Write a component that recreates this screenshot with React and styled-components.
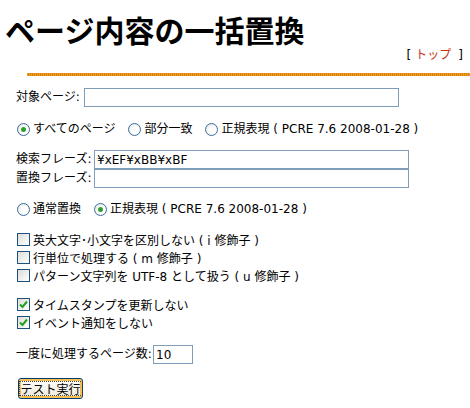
import styled, { createGlobalStyle } from 'styled-components';

const GlobalStyle = createGlobalStyle`
  html, body {
    margin: 0;
    padding: 0;
    background: #ffffff;
  }
  body {
    font-family: "DejaVu Sans", "Noto Sans CJK JP", sans-serif;
    font-size: 12px;
    color: #000000;
  }
`;

const Page = styled.div`
  width: 470px;
  height: 408px;
  overflow: hidden;
`;

const Title = styled.h1`
  margin: 0;
  padding: 13px 0 0 5px;
  height: 32px;
  line-height: 32px;
  font-family: "Noto Sans CJK JP", sans-serif;
  font-size: 30px;
  font-weight: 700;
  white-space: nowrap;
`;

const TopNav = styled.div`
  margin-top: 4px;
  height: 13px;
  line-height: 13px;
  text-align: right;
  padding-right: 7px;
  font-size: 12px;
  a {
    color: #c83412;
    text-decoration: none;
    margin: 0 7px 0 4px;
  }
`;

const Rule = styled.div`
  margin: 11px 0 0 27px;
  height: 3px;
  background: repeating-linear-gradient(90deg, #f0a020 0 1px, #d87c10 1px 2px);
`;

const Form = styled.form`
  padding-left: 16px;
`;

const FieldRow = styled.div`
  display: flex;
  align-items: center;
  height: 19px;
  margin-top: ${(p) => p.$top || 0}px;
`;

const Label = styled.label`
  width: ${(p) => p.$width}px;
  flex: none;
  white-space: nowrap;
  line-height: 19px;
`;

const TextInput = styled.input`
  box-sizing: border-box;
  width: ${(p) => p.$width}px;
  height: 19px;
  margin: 0;
  padding: 0 2px;
  border: 1px solid #7f9db9;
  font-family: "DejaVu Sans", "Noto Sans CJK JP", sans-serif;
  font-size: 12px;
  color: #000;
  background: #fff;
  outline: none;
`;

const OptionRow = styled.div`
  display: flex;
  align-items: center;
  height: 16px;
  margin-top: ${(p) => p.$top || 0}px;
  white-space: nowrap;
`;

const OptionItem = styled.label`
  display: flex;
  align-items: center;
  gap: 3px;
  margin-right: 12px;
  line-height: 16px;
`;

const Radio = styled.span`
  box-sizing: border-box;
  width: 13px;
  height: 13px;
  margin-left: 1px;
  border-radius: 50%;
  border: 1px solid #3c6c9c;
  background: radial-gradient(circle at 60% 60%, #ffffff 0 35%, #dcdcd4 100%);
  display: flex;
  align-items: center;
  justify-content: center;
  flex: none;
  &::after {
    content: '';
    width: 5px;
    height: 5px;
    border-radius: 50%;
    background: #2ca02c;
    display: ${(p) => (p.$checked ? 'block' : 'none')};
  }
`;

const CheckGroup = styled.div`
  margin-top: ${(p) => p.$top || 0}px;
`;

const CheckRow = styled.label`
  display: flex;
  align-items: center;
  gap: 3px;
  height: 18px;
  white-space: nowrap;
`;

const Box = styled.span`
  box-sizing: border-box;
  width: 13px;
  height: 13px;
  margin-left: 1px;
  flex: none;
  border: 1px solid #1c5180;
  background: linear-gradient(135deg, #dcdcd7, #ffffff);
  display: flex;
  align-items: center;
  justify-content: center;
`;

const Button = styled.button`
  margin-top: 14px;
  margin-left: 2px;
  box-sizing: border-box;
  width: 65px;
  height: 21px;
  padding: 0;
  border: 1px solid #003c74;
  border-radius: 3px;
  background: linear-gradient(#ffffff, #ece9d8);
  box-shadow: inset 0 0 0 2px #f8c050;
  font-family: "Noto Sans CJK JP", sans-serif;
  font-size: 12px;
  color: #000;
  display: flex;
  align-items: center;
  justify-content: center;
  white-space: nowrap;
  span {
    border: 1px dotted #444;
    line-height: 13px;
    padding: 0 1px;
  }
`;

const Check = () => (
  <svg width="9" height="9" viewBox="0 0 9 9">
    <path d="M1 4.5 L3.5 7 L8 1.5" fill="none" stroke="#21a121" strokeWidth="2" />
  </svg>
);

export default function App() {
  return (
    <Page>
      <GlobalStyle />
      <Title>ページ内容の一括置換</Title>
      <TopNav>
        [<a href="#top">トップ</a>]
      </TopNav>
      <Rule />
      <Form onSubmit={(e) => e.preventDefault()}>
        <FieldRow $top={12}>
          <Label $width={68}>対象ページ:</Label>
          <TextInput $width={315} defaultValue="" />
        </FieldRow>

        <OptionRow $top={14}>
          <OptionItem><Radio $checked />すべてのページ</OptionItem>
          <OptionItem><Radio />部分一致</OptionItem>
          <OptionItem><Radio />正規表現 ( PCRE 7.6 2008-01-28 )</OptionItem>
        </OptionRow>

        <FieldRow $top={13}>
          <Label $width={78}>検索フレーズ:</Label>
          <TextInput $width={315} defaultValue="¥xEF¥xBB¥xBF" />
        </FieldRow>
        <FieldRow>
          <Label $width={78}>置換フレーズ:</Label>
          <TextInput $width={315} defaultValue="" />
        </FieldRow>

        <OptionRow $top={13}>
          <OptionItem><Radio />通常置換</OptionItem>
          <OptionItem><Radio $checked />正規表現 ( PCRE 7.6 2008-01-28 )</OptionItem>
        </OptionRow>

        <CheckGroup $top={13}>
          <CheckRow><Box />英大文字･小文字を区別しない ( i 修飾子 )</CheckRow>
          <CheckRow><Box />行単位で処理する ( m 修飾子 )</CheckRow>
          <CheckRow><Box />パターン文字列を UTF-8 として扱う ( u 修飾子 )</CheckRow>
        </CheckGroup>

        <CheckGroup $top={11}>
          <CheckRow><Box><Check /></Box>タイムスタンプを更新しない</CheckRow>
          <CheckRow><Box><Check /></Box>イベント通知をしない</CheckRow>
        </CheckGroup>

        <FieldRow $top={14}>
          <Label $width={137}>一度に処理するページ数:</Label>
          <TextInput $width={40} defaultValue="10" />
        </FieldRow>

        <Button type="submit"><span>テスト実行</span></Button>
      </Form>
    </Page>
  );
}
